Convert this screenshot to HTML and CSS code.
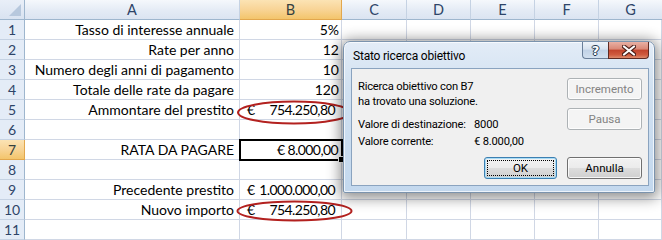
FILE: index.html
```html
<!DOCTYPE html>
<html lang="it">
<head>
  <meta charset="UTF-8" />
  <title>Ricerca obiettivo</title>
  <link rel="stylesheet" href="styles.css">
</head>
<body>
  <div class="sheet">
    <div class="grid">
      <div class="corner"><span class="tri"></span></div>
      <div class="col-head">A</div>
      <div class="col-head active">B</div>
      <div class="col-head">C</div>
      <div class="col-head">D</div>
      <div class="col-head">E</div>
      <div class="col-head">F</div>
      <div class="col-head last">G</div>

      <div class="row-head">1</div>
      <div class="cell label">Tasso di interesse annuale</div>
      <div class="cell num">5%</div>
      <div class="cell"></div><div class="cell"></div><div class="cell"></div><div class="cell"></div><div class="cell"></div>

      <div class="row-head">2</div>
      <div class="cell label">Rate per anno</div>
      <div class="cell num">12</div>
      <div class="cell"></div><div class="cell"></div><div class="cell"></div><div class="cell"></div><div class="cell"></div>

      <div class="row-head">3</div>
      <div class="cell label">Numero degli anni di pagamento</div>
      <div class="cell num">10</div>
      <div class="cell"></div><div class="cell"></div><div class="cell"></div><div class="cell"></div><div class="cell"></div>

      <div class="row-head">4</div>
      <div class="cell label">Totale delle rate da pagare</div>
      <div class="cell num">120</div>
      <div class="cell"></div><div class="cell"></div><div class="cell"></div><div class="cell"></div><div class="cell"></div>

      <div class="row-head">5</div>
      <div class="cell label">Ammontare del prestito</div>
      <div class="cell acct"><span>€</span><span class="amount">754.250,80</span></div>
      <div class="cell"></div><div class="cell"></div><div class="cell"></div><div class="cell"></div><div class="cell"></div>

      <div class="row-head">6</div>
      <div class="cell"></div>
      <div class="cell"></div>
      <div class="cell"></div><div class="cell"></div><div class="cell"></div><div class="cell"></div><div class="cell"></div>

      <div class="row-head active">7</div>
      <div class="cell label">RATA DA PAGARE</div>
      <div class="cell num selected"><span class="amount">€ 8.000,00</span><span class="handle"></span></div>
      <div class="cell"></div><div class="cell"></div><div class="cell"></div><div class="cell"></div><div class="cell"></div>

      <div class="row-head">8</div>
      <div class="cell"></div>
      <div class="cell"></div>
      <div class="cell"></div><div class="cell"></div><div class="cell"></div><div class="cell"></div><div class="cell"></div>

      <div class="row-head">9</div>
      <div class="cell label">Precedente prestito</div>
      <div class="cell acct"><span>€</span><span class="amount">1.000.000,00</span></div>
      <div class="cell"></div><div class="cell"></div><div class="cell"></div><div class="cell"></div><div class="cell"></div>

      <div class="row-head">10</div>
      <div class="cell label">Nuovo importo</div>
      <div class="cell acct"><span>€</span><span class="amount">754.250,80</span></div>
      <div class="cell"></div><div class="cell"></div><div class="cell"></div><div class="cell"></div><div class="cell"></div>

      <div class="row-head">11</div>
      <div class="cell"></div>
      <div class="cell"></div>
      <div class="cell"></div><div class="cell"></div><div class="cell"></div><div class="cell"></div><div class="cell"></div>
    </div>

    <!-- hand drawn circles on the screenshot -->
    <svg class="marks" width="662" height="240" viewBox="0 0 662 240">
      <ellipse cx="294" cy="112.5" rx="56" ry="11" />
      <ellipse cx="294.5" cy="211" rx="57" ry="9.5" />
    </svg>

    <div class="dialog">
      <div class="titlebar">
        <span class="title">Stato ricerca obiettivo</span>
        <div class="caption-btns">
          <span class="cap help">?</span>
          <span class="cap close">
            <svg width="14" height="11" viewBox="0 0 14 11">
              <path d="M2 1.5 L12 9.5 M12 1.5 L2 9.5" stroke="#4b1e18" stroke-width="4.2" stroke-linecap="round"/>
              <path d="M2 1.5 L12 9.5 M12 1.5 L2 9.5" stroke="#fff" stroke-width="2.2" stroke-linecap="round"/>
            </svg>
          </span>
        </div>
      </div>
      <div class="client">
        <div class="top">
          <div class="info">
            <p class="msg">Ricerca obiettivo con B7<br>ha trovato una soluzione.</p>
            <div class="values">
              <span>Valore di destinazione:</span><span>8000</span>
              <span>Valore corrente:</span><span>€ 8.000,00</span>
            </div>
          </div>
          <div class="side">
            <button class="btn" disabled>Incremento</button>
            <button class="btn" disabled>Pausa</button>
          </div>
        </div>
        <div class="actions">
          <button class="btn default"><span class="focus">OK</span></button>
          <button class="btn">Annulla</button>
        </div>
      </div>
    </div>
  </div>
</body>
</html>
```

FILE: styles.css
```css
body {
  margin: 0;
  padding: 0;
  background: #fff;
  overflow: hidden;
}

.sheet {
  position: relative;
  width: 662px;
  height: 240px;
  overflow: hidden;
  font-family: "Lato", "Liberation Sans", sans-serif;
  font-size: 14px;
  color: #000;
}

.grid {
  display: grid;
  grid-template-columns: 25px 215px 102px 65px 64px 64px 64px 63px;
  grid-auto-rows: 20px;
}

.corner,
.col-head,
.row-head,
.cell {
  box-sizing: border-box;
}

.corner {
  position: relative;
  background: linear-gradient(#e9eff8, #d9e3f1);
  border-right: 1px solid #9eb6ce;
  border-bottom: 1px solid #9eb6ce;
}

.corner .tri {
  position: absolute;
  right: 3px;
  bottom: 3px;
  width: 0;
  height: 0;
  border-left: 12px solid transparent;
  border-bottom: 12px solid #b7c8dd;
}

.col-head {
  display: flex;
  align-items: center;
  justify-content: center;
  background: linear-gradient(#f5f8fc, #e4ebf5 55%, #dbe4f1);
  border-right: 1px solid #c5d2e3;
  border-bottom: 1px solid #9eb6ce;
  color: #2e4468;
  font-size: 14.5px;
}

.col-head.active,
.row-head.active {
  background: linear-gradient(#fbe3b4, #f8d496 50%, #f3c56b);
  border-right-color: #e2a74d;
  border-bottom-color: #e2a74d;
  color: #35413f;
}

.col-head.last {
  border-right: none;
}

.row-head {
  display: flex;
  align-items: center;
  justify-content: center;
  background: #e4ecf7;
  border-right: 1px solid #9eb6ce;
  border-bottom: 1px solid #c5d2e3;
  color: #2e4468;
}

.cell {
  display: flex;
  align-items: center;
  border-right: 1px solid #d0d7e5;
  border-bottom: 1px solid #d0d7e5;
  white-space: nowrap;
}

.cell.label {
  justify-content: flex-end;
  padding-right: 5px;
}

.cell.num {
  justify-content: flex-end;
  padding-right: 2px;
}

.cell.acct {
  justify-content: space-between;
  padding: 0 6px 0 7px;
}

.amount {
  letter-spacing: -0.6px;
}

.cell.selected {
  position: relative;
  outline: 2px solid #000;
  outline-offset: -1px;
  padding-right: 3px;
  z-index: 1;
}

.cell.selected .handle {
  position: absolute;
  right: -4px;
  bottom: -4px;
  width: 5px;
  height: 5px;
  background: #000;
  border: 1px solid #fff;
}

.marks {
  position: absolute;
  top: 0;
  left: 0;
  pointer-events: none;
  z-index: 2;
}

.marks ellipse {
  fill: none;
  stroke: #b3211f;
  stroke-width: 2;
}

/* goal seek status window */
.dialog {
  position: absolute;
  left: 343px;
  top: 41px;
  width: 312px;
  height: 152px;
  box-sizing: border-box;
  display: flex;
  flex-direction: column;
  background: linear-gradient(#e3ecf7, #d1e1f1 30%, #c3d8ee);
  border: 1px solid #7b93ad;
  border-radius: 7px 7px 2px 2px;
  box-shadow: 0 2px 14px 3px rgba(0, 0, 0, 0.45), inset 0 0 0 1px rgba(255, 255, 255, 0.7);
  font-family: "Roboto", "Noto Sans", sans-serif;
  font-size: 11.2px;
  letter-spacing: -0.2px;
  color: #000;
  white-space: nowrap;
  z-index: 3;
}

.titlebar {
  display: flex;
  justify-content: space-between;
  align-items: flex-start;
  height: 26px;
  padding: 0 5px 0 9px;
}

.title {
  padding-top: 6px;
  font-size: 12px;
  line-height: 16px;
}

.caption-btns {
  display: flex;
  letter-spacing: 0;
}

.cap {
  display: flex;
  align-items: center;
  justify-content: center;
  height: 17px;
  box-sizing: border-box;
  border: 1px solid #6a7f99;
  border-top: none;
}

.cap.help {
  width: 26px;
  border-radius: 0 0 0 4px;
  border-right: none;
  background: linear-gradient(#eef3f9, #d7e2ef 45%, #c1d2e6 50%, #d2e0ef);
  color: #fff;
  font-family: "DejaVu Sans", sans-serif;
  font-weight: bold;
  font-size: 13px;
  text-shadow: 0 0 1px #26384f, 1px 0 0 #26384f, -1px 0 0 #26384f, 0 1px 0 #26384f, 0 -1px 0 #26384f;
}

.cap.close {
  width: 41px;
  border-radius: 0 0 4px 0;
  border-color: #5e2a22;
  background: linear-gradient(#e9b0a4, #d98876 45%, #c2432c 50%, #cf5b3f 80%, #dd8a6c);
}

.client {
  flex: 1;
  display: flex;
  flex-direction: column;
  margin: 0 5px 6px 7px;
  padding: 9px 6px 6px 6px;
  background: #f0f0f0;
  border: 1px solid #8aa3bf;
}

.top {
  display: flex;
  justify-content: space-between;
}

.info {
  padding-top: 1px;
}

.msg {
  margin: 0;
  line-height: 15px;
}

.values {
  display: grid;
  grid-template-columns: 116px auto;
  grid-auto-rows: 17px;
  align-items: center;
  margin-top: 7px;
}

.side {
  display: flex;
  flex-direction: column;
  gap: 8px;
}

.actions {
  display: flex;
  justify-content: flex-end;
  gap: 10px;
  margin-top: auto;
}

.btn {
  width: 75px;
  height: 22px;
  padding: 0;
  box-sizing: border-box;
  border: 1px solid #707070;
  border-radius: 3px;
  background: linear-gradient(#f2f2f2, #ebebeb 50%, #dddddd 51%, #cfcfcf);
  box-shadow: inset 0 0 0 1px rgba(255, 255, 255, 0.8);
  font-family: inherit;
  font-size: 11.5px;
  color: #000;
}

.btn:disabled {
  border-color: #adb2b5;
  background: #f4f4f4;
  color: #838383;
}

.btn.default {
  width: 73px;
  border-color: #3c7fb1;
  box-shadow: inset 0 0 0 1px #a9dcf6;
  display: flex;
  padding: 2px;
}

.btn.default .focus {
  flex: 1;
  display: flex;
  align-items: center;
  justify-content: center;
  border: 1px dotted #000;
}
```
